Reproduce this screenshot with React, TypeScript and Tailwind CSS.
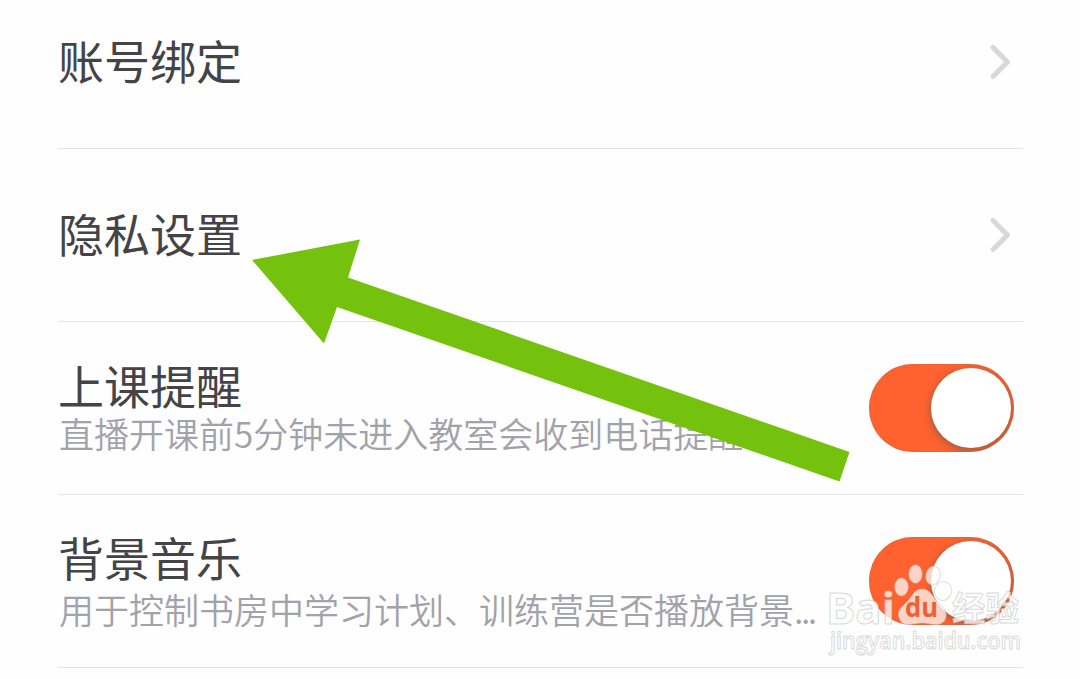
interface SettingRow {
  title: string;
  description?: string;
  truncated?: boolean;
  titleClass: string;
  descriptionClass?: string;
}

const rows: SettingRow[] = [
  { title: "账号绑定", titleClass: "pt-[58px]" },
  { title: "隐私设置", titleClass: "pt-[58px]" },
  { title: "上课提醒", description: "直播开课前5分钟未进入教室会收到电话提醒", titleClass: "pt-[37px]", descriptionClass: "mt-[4px]" },
  { title: "背景音乐", description: "用于控制书房中学习计划、训练营是否播放背景", truncated: true, titleClass: "pt-[36px]", descriptionClass: "mt-[8px]" },
];

function Chevron() {
  return (
    <svg className="mr-[10px] h-[40px] w-[26px]" viewBox="0 0 26 40" fill="none">
      <path d="M6 5.5L20.5 20L6 34.5" stroke="#d8d8d8" strokeWidth="5" strokeLinecap="round" strokeLinejoin="round" />
    </svg>
  );
}

function Toggle() {
  return (
    <div className="mr-[9px] flex h-[88px] w-[145px] items-center justify-end overflow-hidden rounded-full bg-[#ff622f] pr-[3px] shadow-[inset_0_0_2px_#c96045]">
      <div className="h-[80px] w-[80px] rounded-full bg-white shadow-[0_2px_7px_1px_rgba(110,90,80,0.65)]" />
    </div>
  );
}

function Arrow() {
  return (
    <svg className="pointer-events-none absolute top-[236px] left-[248px] h-[250px] w-[606px]" viewBox="248 236 606 250">
      <path d="M252 260L360 239.5L348 277.5L849.5 452L839.5 481.5L337 307L324 343.5Z" fill="#74c20d" />
    </svg>
  );
}

function Watermark() {
  return (
    <svg className="pointer-events-none absolute top-[560px] left-[824px] h-[100px] w-[204px]" viewBox="824 560 204 100">
      <g fill="#ffffff" fillOpacity="0.72" stroke="#b9b9b9" strokeOpacity="0.5" strokeWidth="1">
        <ellipse cx="901.5" cy="587" rx="6.8" ry="9" />
        <ellipse cx="915.5" cy="574" rx="6.7" ry="9.2" />
        <ellipse cx="933" cy="575.5" rx="7.2" ry="9.5" transform="rotate(14 933 575.5)" />
        <ellipse cx="943" cy="591" rx="8.5" ry="9.5" transform="rotate(14 943 591)" />
        <path d="M922 589C914 589 912 597 906 603C898 609 897 614 900 620C904 628 914 623 922 623C930 623 940 628 945 620C948 613 945 609 938 602C932 596 930 589 922 589Z" />
      </g>
      <g fill="#ffffff" fillOpacity="0.75" stroke="#c4c4c4" strokeOpacity="0.65" strokeWidth="1" fontWeight="700">
        <text x="826" y="623.5" fontSize="43" textLength="69" lengthAdjust="spacingAndGlyphs" fontFamily="Open Sans, sans-serif">Bai</text>
        <text x="952" y="621" fontSize="34" textLength="67" lengthAdjust="spacingAndGlyphs" fontFamily="Noto Sans CJK SC, sans-serif">经验</text>
        <text x="830" y="649" fontSize="23.5" fontWeight="600" textLength="191" lengthAdjust="spacingAndGlyphs" fontFamily="Open Sans, sans-serif">jingyan.baidu.com</text>
      </g>
      <text x="905" y="617" fontSize="26" fontWeight="700" textLength="33" lengthAdjust="spacingAndGlyphs" fontFamily="Open Sans, sans-serif" fill="#ee6033">du</text>
    </svg>
  );
}

export default function App() {
  return (
    <main className="relative h-[679px] w-[1080px] overflow-hidden bg-[#fefefe] font-['Noto_Sans_CJK_SC',sans-serif]">
      <div className="-mt-[24px] ml-[58px] w-[965px]">
        {rows.map((row) => (
          <section
            key={row.title}
            className="flex h-[173px] items-center justify-between border-b border-[#e4e4e4]"
          >
            <div className="h-full">
              <h2 className={`${row.titleClass} text-[46px] leading-[50px] font-normal whitespace-nowrap text-[#444446]`}>
                {row.title}
              </h2>
              {row.description && (
                <p className={`${row.descriptionClass} ml-px h-[40px] w-[765px] text-[35px] leading-[40px] font-[350] whitespace-nowrap text-[#a2a2aa]`}>
                  {row.description}
                  {row.truncated && <span className="tracking-[-2.5px]">...</span>}
                </p>
              )}
            </div>
            {row.description ? <Toggle /> : <Chevron />}
          </section>
        ))}
      </div>
      <Arrow />
      <Watermark />
    </main>
  );
}
